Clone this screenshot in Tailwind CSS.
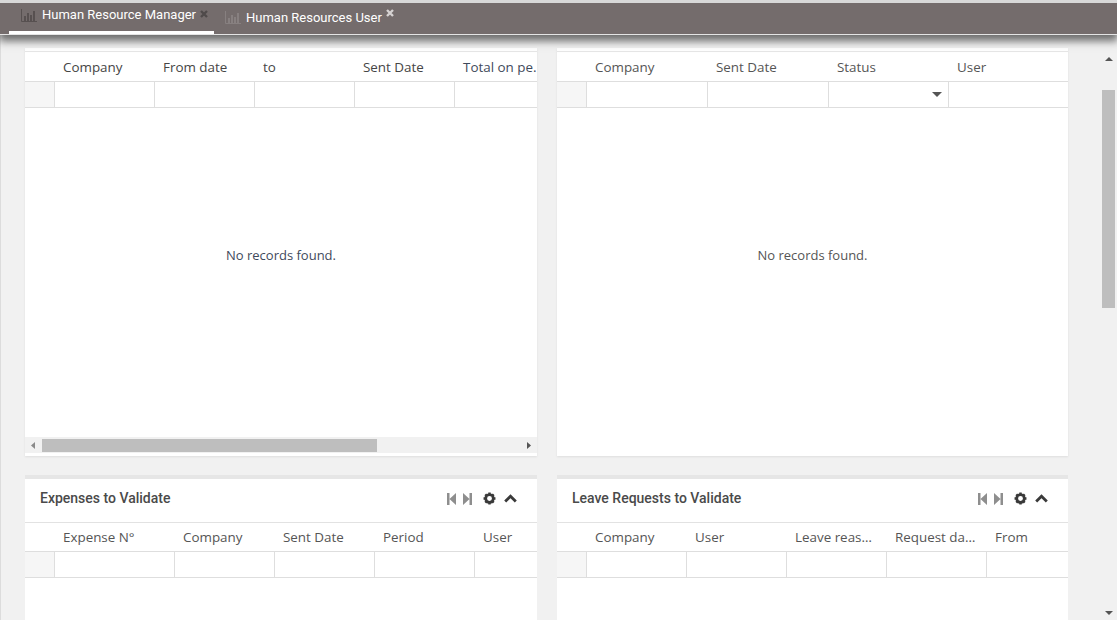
<!DOCTYPE html>
<html><head><meta charset="utf-8"><script src="https://cdn.jsdelivr.net/npm/@tailwindcss/browser@4"></script></head>
<body class="m-0 overflow-hidden bg-[#f1f1f1]">
<div class="relative h-[620px] w-[1117px] overflow-hidden bg-[#f1f1f1] font-['Open_Sans',sans-serif] text-[13.4px] text-[#555]">
  <!-- tab bar -->
  <div class="relative z-10 h-[35px] border-t-[3px] border-[#d8d8d8] border-b border-b-[#e4e4e4] bg-[#746c6c] pl-[1px] font-['Roboto',sans-serif] text-[13px] text-white shadow-[0_5px_8px_1px_rgba(50,50,50,0.7)]">
    <div class="flex h-[31px]">
      <div class="ml-[8px] flex h-[31px] w-[205px] items-start border-b-[3px] border-white pl-[12px] pt-[4px]">
        <svg class="mt-[2px] h-[13px] w-[16px]" viewBox="0 0 16 13"><path d="M.5 0v12.500H16" fill="none" stroke="#575050"/><path d="M3 7h2v5H3zM6 4h2v8H6zM9 6h2v6H9zM12 2h2v10h-2z" fill="#575050"/></svg>
        <span class="ml-[5px] leading-[16px]">Human Resource Manager</span>
        <svg class="ml-[4px] mt-[3px] h-[8px] w-[8px]" viewBox="0 0 8 8"><path d="M1 1l6 6M7 1L1 7" stroke="#4f4a4a" stroke-width="2.400"/></svg>
      </div>
      <div class="ml-[11px] flex items-start pt-[6px]">
        <svg class="mt-[2px] h-[13px] w-[16px]" viewBox="0 0 16 13"><path d="M.5 0v12.500H16" fill="none" stroke="#878080"/><path d="M3 7h2v5H3zM6 4h2v8H6zM9 6h2v6H9zM12 2h2v10h-2z" fill="#878080"/></svg>
        <span class="ml-[5px] mt-[1px] leading-[16px]">Human Resources User</span>
        <svg class="ml-[4px] mt-[0px] h-[8px] w-[8px] self-start" viewBox="0 0 8 8"><path d="M1 1l6 6M7 1L1 7" stroke="#d6d2d2" stroke-width="2.400"/></svg>
      </div>
    </div>
  </div>

  <!-- left edge -->
  <div class="absolute left-0 top-[35px] h-[585px] w-px bg-[#dcdcdc]"></div>

  <!-- content -->
  <div class="grid grid-cols-[512px_511px] gap-x-[20px] gap-y-[19px] pl-[25px] pt-[13px]">
    <!-- top-left -->
    <section class="h-[408px] overflow-hidden bg-white shadow-[0_1px_2px_rgba(0,0,0,0.08)]">
      <div class="mt-[3px] border-t border-[#e6e6e6]"></div>
      <div class="flex h-[30px] items-center border-b border-[#dedede] pt-[1px] text-[#454545]">
        <div class="w-[30px]"></div>
        <div class="w-[100px] pl-[8px]">Company</div>
        <div class="w-[100px] pl-[8px]">From date</div>
        <div class="w-[100px] pl-[8px]">to</div>
        <div class="w-[100px] pl-[8px]">Sent Date</div>
        <div class="w-[82px] pl-[8px] text-[#3f4a5c]">Total on pe.</div>
      </div>
      <div class="flex h-[26px] border-b border-[#dedede]">
        <div class="w-[30px] border-r border-[#dedede] bg-[#f6f6f6]"></div>
        <div class="w-[100px] border-r border-[#dedede]"></div>
        <div class="w-[100px] border-r border-[#dedede]"></div>
        <div class="w-[100px] border-r border-[#dedede]"></div>
        <div class="w-[100px] border-r border-[#dedede]"></div>
      </div>
      <div class="flex h-[329px] items-center justify-center pb-[34px] text-[13px] text-[#3f4a5c]">No records found.</div>
      <div class="flex h-[16px] items-center bg-[#f1f1f1]">
        <svg class="ml-[6px] h-[7px] w-[5px]" viewBox="0 0 5 7"><path d="M4 0v7L0 3.500z" fill="#8a8a8a"/></svg>
        <div class="ml-[6px] h-[13px] w-[335px] bg-[#bebebe]"></div>
        <svg class="ml-[149px] h-[7px] w-[5px]" viewBox="0 0 5 7"><path d="M1 0v7L5 3.500z" fill="#555"/></svg>
      </div>
    </section>
    <!-- top-right -->
    <section class="h-[408px] overflow-hidden bg-white shadow-[0_1px_2px_rgba(0,0,0,0.08)]">
      <div class="mt-[3px] border-t border-[#e6e6e6]"></div>
      <div class="flex h-[30px] items-center border-b border-[#dedede] pt-[1px]">
        <div class="w-[30px]"></div>
        <div class="w-[121px] pl-[8px]">Company</div>
        <div class="w-[121px] pl-[8px]">Sent Date</div>
        <div class="w-[120px] pl-[8px]">Status</div>
        <div class="w-[119px] pl-[8px]">User</div>
      </div>
      <div class="flex h-[26px] border-b border-[#dedede]">
        <div class="w-[30px] border-r border-[#dedede] bg-[#f6f6f6]"></div>
        <div class="w-[121px] border-r border-[#dedede]"></div>
        <div class="w-[121px] border-r border-[#dedede]"></div>
        <div class="flex w-[120px] items-center justify-end border-r border-[#dedede] pr-[6px]">
          <svg class="h-[5px] w-[10px]" viewBox="0 0 10 5"><path d="M0 0h10L5 5z" fill="#555"/></svg>
        </div>
      </div>
      <div class="flex h-[329px] items-center justify-center pb-[34px] text-[13px]">No records found.</div>
    </section>
    <!-- bottom-left -->
    <section class="h-[200px] overflow-hidden border-t-[4px] border-[#e6e6e6] bg-white">
      <div class="flex h-[44px] items-center border-b border-[#e2e2e2] pb-[4px] pl-[15px] pr-[20px]">
        <h2 class="font-['Roboto',sans-serif] text-[14px] font-medium text-[#4a4a4a]">Expenses to Validate</h2>
        <div class="ml-auto flex items-center">
          <svg class="h-[12px] w-[9px]" viewBox="0 0 9 12"><path d="M0 0h2.500v12H0zM9 0v12L2.500 6z" fill="#8e8e8e"/></svg>
          <svg class="ml-[7px] h-[12px] w-[9px]" viewBox="0 0 9 12"><path d="M9 0H6.500v12H9zM0 0v12l6.500-6z" fill="#8e8e8e"/></svg>
          <svg class="ml-[11px] h-[13px] w-[13px]" viewBox="0 0 24 24"><circle cx="12" cy="12" r="7" fill="none" stroke="#3a3a3a" stroke-width="5"/><path d="M12 1v22M1 12h22M4.200 4.200l15.600 15.600M19.800 4.200L4.200 19.800" stroke="#3a3a3a" stroke-width="4.500" stroke-dasharray="5 12 5"/></svg>
          <svg class="ml-[8px] h-[9px] w-[13px]" viewBox="0 0 13 9"><path d="M1.200 7.500L6.500 2.200l5.300 5.300" fill="none" stroke="#3a3a3a" stroke-width="2.800"/></svg>
        </div>
      </div>
      <div class="flex h-[29px] items-center border-b border-[#dedede] pt-[1px]">
        <div class="w-[30px]"></div>
        <div class="w-[120px] pl-[8px]">Expense N°</div>
        <div class="w-[100px] pl-[8px]">Company</div>
        <div class="w-[100px] pl-[8px]">Sent Date</div>
        <div class="w-[100px] pl-[8px]">Period</div>
        <div class="w-[62px] pl-[8px]">User</div>
      </div>
      <div class="flex h-[26px] border-b border-[#dedede]">
        <div class="w-[30px] border-r border-[#dedede] bg-[#f6f6f6]"></div>
        <div class="w-[120px] border-r border-[#dedede]"></div>
        <div class="w-[100px] border-r border-[#dedede]"></div>
        <div class="w-[100px] border-r border-[#dedede]"></div>
        <div class="w-[100px] border-r border-[#dedede]"></div>
      </div>
    </section>
    <!-- bottom-right -->
    <section class="h-[200px] overflow-hidden border-t-[4px] border-[#e6e6e6] bg-white">
      <div class="flex h-[44px] items-center border-b border-[#e2e2e2] pb-[4px] pl-[15px] pr-[20px]">
        <h2 class="font-['Roboto',sans-serif] text-[14px] font-medium text-[#4a4a4a]">Leave Requests to Validate</h2>
        <div class="ml-auto flex items-center">
          <svg class="h-[12px] w-[9px]" viewBox="0 0 9 12"><path d="M0 0h2.500v12H0zM9 0v12L2.500 6z" fill="#8e8e8e"/></svg>
          <svg class="ml-[7px] h-[12px] w-[9px]" viewBox="0 0 9 12"><path d="M9 0H6.500v12H9zM0 0v12l6.500-6z" fill="#8e8e8e"/></svg>
          <svg class="ml-[11px] h-[13px] w-[13px]" viewBox="0 0 24 24"><circle cx="12" cy="12" r="7" fill="none" stroke="#3a3a3a" stroke-width="5"/><path d="M12 1v22M1 12h22M4.200 4.200l15.600 15.600M19.800 4.200L4.200 19.800" stroke="#3a3a3a" stroke-width="4.500" stroke-dasharray="5 12 5"/></svg>
          <svg class="ml-[8px] h-[9px] w-[13px]" viewBox="0 0 13 9"><path d="M1.200 7.500L6.500 2.200l5.300 5.300" fill="none" stroke="#3a3a3a" stroke-width="2.800"/></svg>
        </div>
      </div>
      <div class="flex h-[29px] items-center border-b border-[#dedede] pt-[1px]">
        <div class="w-[30px]"></div>
        <div class="w-[100px] pl-[8px]">Company</div>
        <div class="w-[100px] pl-[8px]">User</div>
        <div class="w-[100px] truncate pl-[8px] pr-[13px]">Leave reason</div>
        <div class="w-[100px] truncate pl-[8px] pr-[10px]">Request date</div>
        <div class="w-[81px] pl-[8px]">From</div>
      </div>
      <div class="flex h-[26px] border-b border-[#dedede]">
        <div class="w-[30px] border-r border-[#dedede] bg-[#f6f6f6]"></div>
        <div class="w-[100px] border-r border-[#dedede]"></div>
        <div class="w-[100px] border-r border-[#dedede]"></div>
        <div class="w-[100px] border-r border-[#dedede]"></div>
        <div class="w-[100px] border-r border-[#dedede]"></div>
      </div>
    </section>
  </div>

  <!-- page scrollbar -->
  <div class="absolute right-0 top-[35px] h-[585px] w-[15px]">
    <svg class="absolute left-[3px] top-[22px] h-[4px] w-[8px]" viewBox="0 0 8 4"><path d="M4 0l4 4H0z" fill="#555"/></svg>
    <div class="absolute left-0 top-[55px] h-[218px] w-[13px] bg-[#bebebe]"></div>
    <svg class="absolute left-[3px] bottom-[5px] h-[4px] w-[8px]" viewBox="0 0 8 4"><path d="M0 0h8L4 4z" fill="#555"/></svg>
  </div>
</div>
</body></html>
